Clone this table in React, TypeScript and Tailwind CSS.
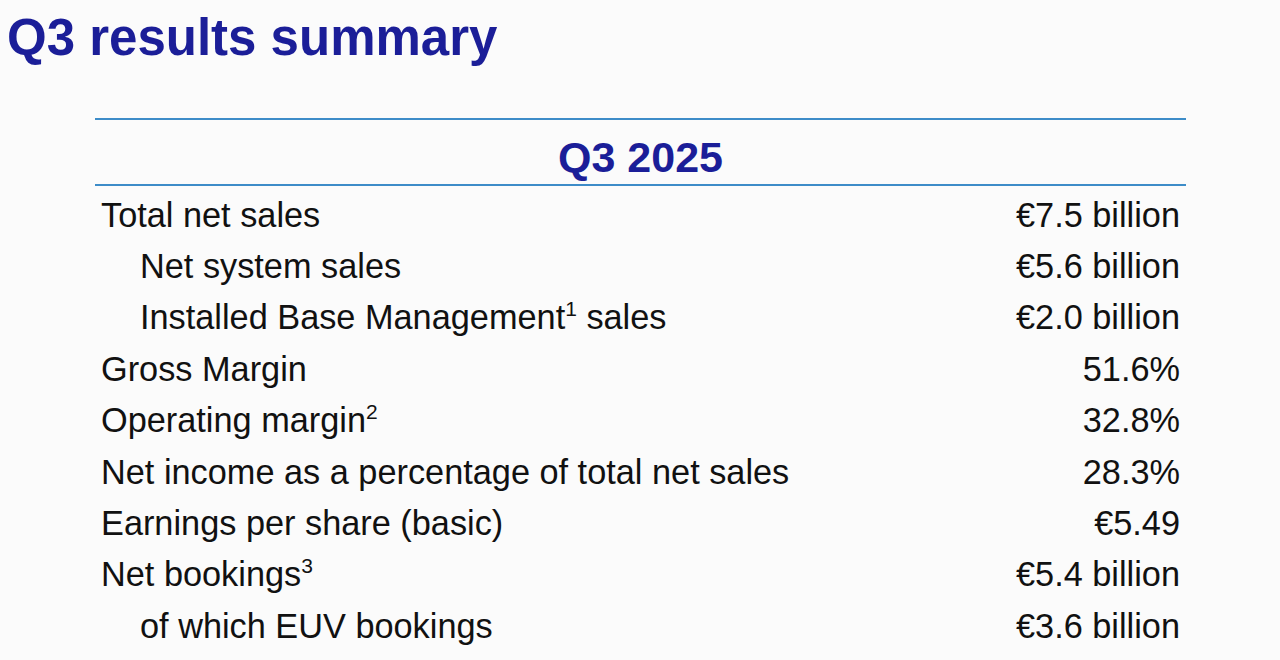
import React from "react";

type Row = {
  label: string;
  sup?: string;
  after?: string;
  value: string;
  indent?: boolean;
};

const rows: Row[] = [
  { label: "Total net sales", value: "€7.5 billion" },
  { label: "Net system sales", value: "€5.6 billion", indent: true },
  { label: "Installed Base Management", sup: "1", after: " sales", value: "€2.0 billion", indent: true },
  { label: "Gross Margin", value: "51.6%" },
  { label: "Operating margin", sup: "2", value: "32.8%" },
  { label: "Net income as a percentage of total net sales", value: "28.3%" },
  { label: "Earnings per share (basic)", value: "€5.49" },
  { label: "Net bookings", sup: "3", value: "€5.4 billion" },
  { label: "of which EUV bookings", value: "€3.6 billion", indent: true },
];

export default function App() {
  return (
    <div className="w-[1280px] h-[660px] overflow-hidden bg-[#fbfbfb] font-['Liberation_Sans',Arial,sans-serif]">
      {/* Slide title */}
      <h1 className="pl-[7px] pt-[12px] text-[51px] leading-none font-bold text-[#1b1e98]">
        Q3 results summary
      </h1>

      {/* Summary table */}
      <div className="ml-[95px] mt-[55px] w-[1091px]">
        <div className="h-[2px] bg-[#3d8cc8]" />
        <div className="h-[64px] flex items-center justify-center">
          <span className="text-[43px] leading-none font-bold text-[#1b1e98] pt-[10px]">Q3 2025</span>
        </div>
        <div className="h-[2px] bg-[#3d8cc8]" />

        <div className="pt-[3px]">
          {rows.map((r) => (
            <div
              key={r.label}
              className="h-[51.4px] flex items-center justify-between pl-[6px] pr-[6px] text-[34.3px] leading-none text-[#111111]"
            >
              <span className={r.indent ? "pl-[39px]" : ""}>
                {r.label}
                {r.sup && <sup className="text-[21px] relative -top-[13px]">{r.sup}</sup>}
                {r.after}
              </span>
              <span>{r.value}</span>
            </div>
          ))}
        </div>
      </div>
    </div>
  );
}
